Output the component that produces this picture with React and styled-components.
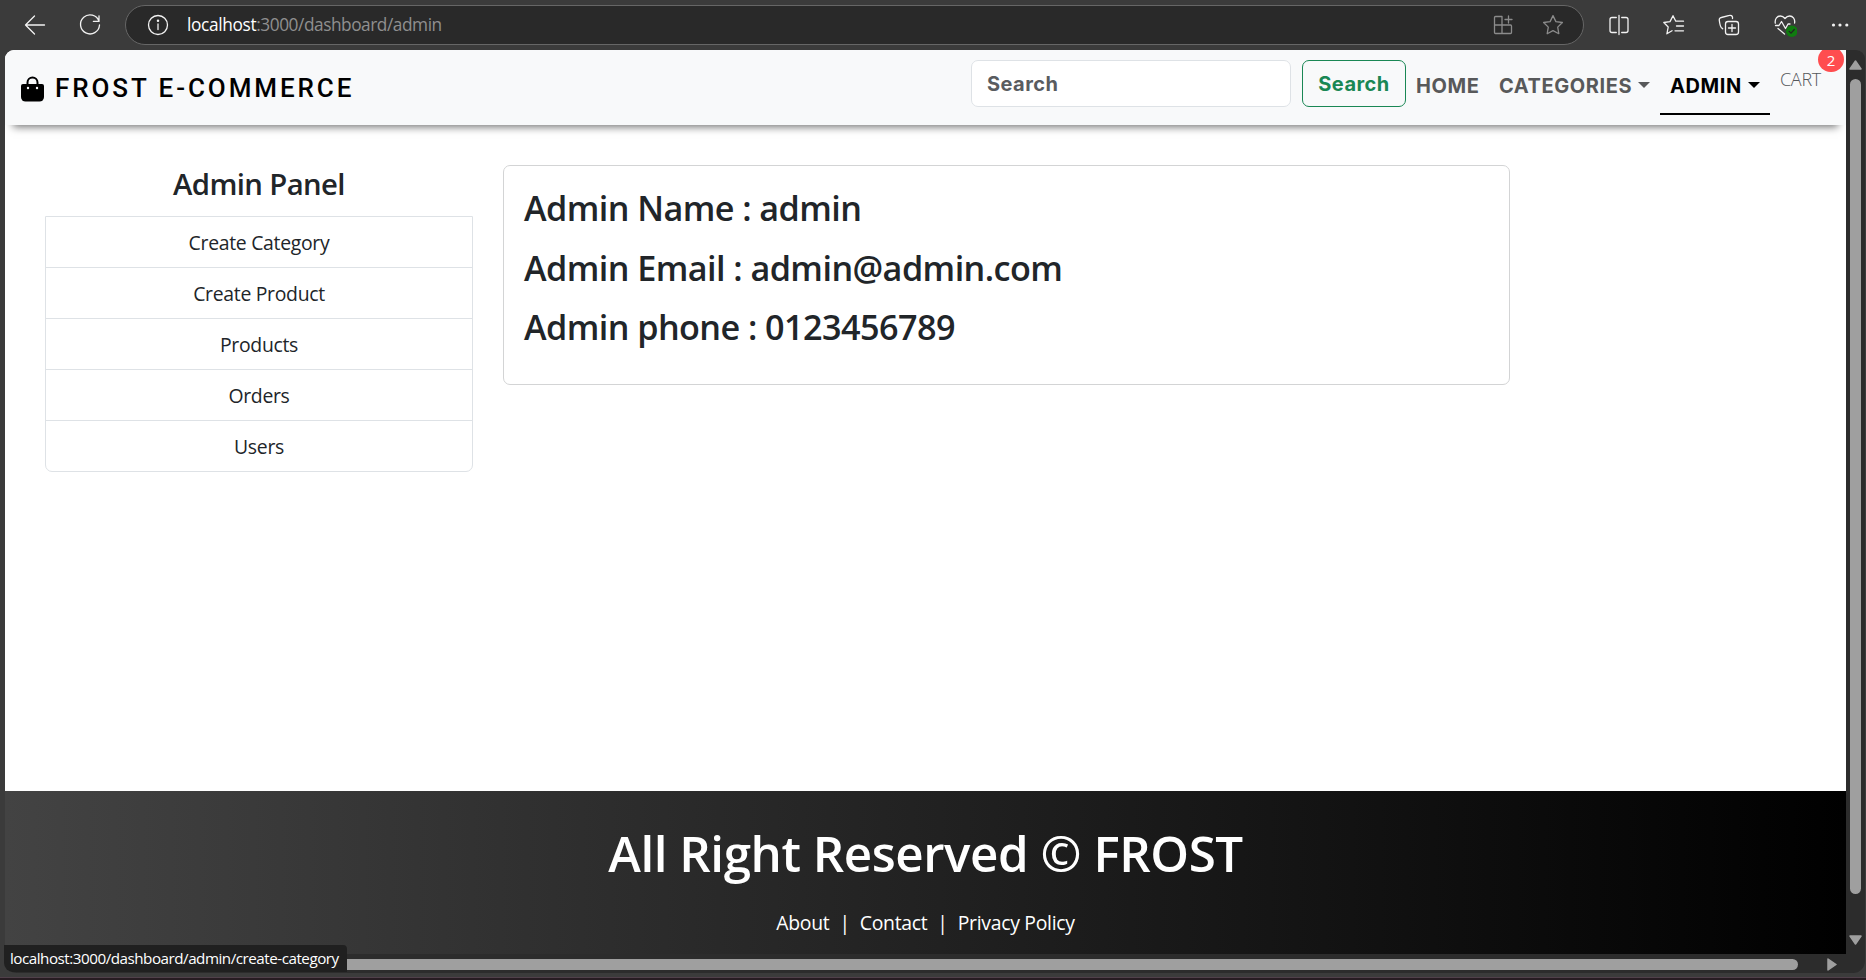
import React from "react";
import styled, { createGlobalStyle, css } from "styled-components";

const GlobalStyle = createGlobalStyle`
  *, *::before, *::after { box-sizing: border-box; }
  body {
    margin: 0;
    overflow: hidden;
    background: #3b3b3b;
    color: #212529;
    font-family: "Open Sans", "Noto Sans", sans-serif;
  }
  a { color: inherit; text-decoration: none; }
  h1, h3, h4, p, ul { margin: 0; padding: 0; }
`;

/* ---------- browser window ---------- */

const Window = styled.div`
  display: flex;
  flex-direction: column;
  width: 1866px;
  height: 980px;
  overflow: hidden;
  background: #3b3b3b;
`;

const BrowserBar = styled.header`
  display: flex;
  align-items: center;
  flex: none;
  height: 50px;
  padding: 0 14px 1px 23px;
  color: #f2f2f2;
`;

const BarActions = styled.div`
  display: flex;
  align-items: center;
  gap: ${(p) => p.$gap}px;
`;

const BarButton = styled.span`
  display: block;
  width: 24px;
  height: 24px;
  color: ${(p) => (p.$muted ? "#8b8b8b" : "inherit")};

  svg {
    display: block;
    width: 24px;
    height: 24px;
    fill: none;
    stroke: currentColor;
    stroke-width: 1.3;
    stroke-linecap: round;
    stroke-linejoin: round;
  }
`;

const AddressBar = styled.div`
  display: flex;
  align-items: center;
  width: 1460px;
  height: 40px;
  margin: 1px 22.5px 0 23px;
  padding: 0 18px 0 19.5px;
  border: 1px solid #666;
  border-radius: 20px;
  background: #292929;
`;

const Url = styled.span`
  flex: 1;
  margin-left: 17.5px;
  color: #8f8f8f;
  font-size: 17.3px;
  letter-spacing: -0.46px;
  line-height: 24px;
  white-space: nowrap;
`;

const Host = styled.span`
  color: #fff;
  letter-spacing: -0.35px;
`;

const Viewport = styled.div`
  display: grid;
  grid-template-columns: 1841px 19px;
  grid-template-rows: 904px 19px;
  flex: none;
  margin-left: 5px;
  width: 1860px;
  overflow: hidden;
  border-radius: 9px 9px 12px 12px;
  background: #2c2c2c;
`;

const Page = styled.div`
  display: flex;
  flex-direction: column;
  overflow: hidden;
  background: #fff;
`;

const VerticalScroll = styled.div`
  display: flex;
  flex-direction: column;
  align-items: center;
  height: 904px;
  padding: 10px 0 9px;
`;

const VerticalThumb = styled.div`
  width: 11px;
  height: 815px;
  margin: 9px 0 41px;
  border-radius: 6px;
  background: #9f9f9f;
`;

const HorizontalScroll = styled.div`
  display: flex;
  align-items: center;
  justify-content: space-between;
  padding: 1px 9px 0 4px;
`;

const HorizontalThumb = styled.div`
  width: 1789px;
  height: 11px;
  border-radius: 6px;
  background: #9f9f9f;
`;

const ScrollArrow = styled.svg`
  display: block;
  flex: none;
  fill: #9f9f9f;
  stroke: #9f9f9f;
  stroke-width: 1.5;
  stroke-linejoin: round;
`;

const DesktopEdge = styled.div`
  height: 3px;
  margin-top: auto;
  border-top: 1px solid #50404a;
  background: #271c22;
`;

const StatusBubble = styled.div`
  position: absolute;
  left: 4px;
  top: 945px;
  width: 343px;
  height: 27px;
  padding-left: 6px;
  border-radius: 0 4px 0 9px;
  background: #202020;
  color: #fff;
  font-size: 15.2px;
  line-height: 27px;
  letter-spacing: -0.48px;
  white-space: nowrap;
`;

/* ---------- store navigation ---------- */

const Navbar = styled.nav`
  display: flex;
  align-items: flex-start;
  flex: none;
  height: 75px;
  background: #f8f9fa;
  box-shadow: 0 10px 8px -8px rgba(0, 0, 0, 0.55);
  font-family: Inter, "Open Sans", sans-serif;
  font-weight: 700;
  font-size: 20px;
`;

const Brand = styled.a`
  display: flex;
  align-items: center;
  gap: 11px;
  height: 75px;
  margin-right: auto;
  padding-left: 16px;
  color: #000;
  font: 500 26px/1 Roboto, sans-serif;
  letter-spacing: 2.92px;
  white-space: nowrap;

  svg {
    width: 23px;
    height: 26px;
    margin-top: 3px;
  }
`;

const SearchForm = styled.form`
  display: flex;
  gap: 11px;
  margin: 0;
  padding-top: 10px;
`;

const field = css`
  height: 47px;
  border-radius: 7px;
  font: inherit;
  letter-spacing: 0.45px;
`;

const SearchInput = styled.input`
  ${field}
  width: 320px;
  padding: 0 15px;
  border: 1px solid #dee2e6;
  background: #fff;
  outline: none;
  &::placeholder { color: #595c5f; opacity: 1; }
`;

const SearchButton = styled.button`
  ${field}
  width: 104px;
  padding: 0;
  border: 1px solid #198754;
  background: transparent;
  color: #198754;
`;

const NavItem = styled.a`
  display: flex;
  align-items: center;
  width: ${(p) => p.$width}px;
  height: 57px;
  margin-top: 8px;
  padding: 0 0 0 10px;
  border-bottom: 2px solid ${(p) => (p.$active ? "#000" : "transparent")};
  color: ${(p) => (p.$active ? "#000" : "#58595a")};
  letter-spacing: 0.58px;
  white-space: nowrap;
`;

const Caret = styled.i`
  margin: 0 0 2px 6px;
  border: 6px solid transparent;
  border-top-color: currentColor;
  border-bottom: 0;
`;

const CartLink = styled.a`
  position: relative;
  width: 76px;
  padding: 17px 0 0 10px;
  color: #55585b;
  font: 300 18px/25px "Open Sans", sans-serif;
  letter-spacing: -0.3px;
`;

const CartBadge = styled.span`
  position: absolute;
  top: -3px;
  left: 48px;
  width: 26px;
  height: 25px;
  border-radius: 13px;
  background: #ff4d4f;
  color: #fff;
  font-weight: 400;
  font-size: 15px;
  line-height: 26px;
  text-align: center;
`;

/* ---------- dashboard ---------- */

const Dashboard = styled.main`
  display: flex;
  align-items: flex-start;
  flex: none;
  gap: 30px;
  height: 666px;
  padding: 40px 0 0 40px;
`;

const Sidebar = styled.aside`
  width: 428px;
  text-align: center;
`;

const SidebarTitle = styled.h4`
  margin-bottom: 12px;
  font-weight: 600;
  font-size: 29.3px;
  line-height: 39px;
  letter-spacing: -0.62px;
`;

const MenuList = styled.div`
  border: 1px solid #dee2e6;
  border-radius: 0 0 7px 7px;
`;

const MenuItem = styled.a`
  display: block;
  height: 51px;
  border-bottom: 1px solid #dee2e6;
  font-size: 19.4px;
  line-height: 52px;
  letter-spacing: -0.3px;
  &:last-child {
    height: 50px;
    border-bottom: 0;
  }
`;

const InfoCard = styled.section`
  display: flex;
  flex-direction: column;
  gap: 9.5px;
  width: 1007px;
  height: 220px;
  padding: 17px 20px;
  border: 1px solid #d3d4d5;
  border-radius: 7px;
`;

const InfoLine = styled.h3`
  font-weight: 600;
  font-size: 34.2px;
  line-height: 50px;
  letter-spacing: -0.57px;
  white-space: nowrap;
`;

const Footer = styled.footer`
  display: flex;
  flex-direction: column;
  align-items: center;
  flex: 1;
  padding-top: 27px;
  background: linear-gradient(to right, #434343 0%, #000 100%);
  color: #fff;
`;

const FooterTitle = styled.h1`
  font-weight: 600;
  font-size: 49.3px;
  line-height: 70px;
  letter-spacing: -0.45px;
`;

const FooterLinks = styled.p`
  display: flex;
  gap: 10px;
  margin-top: 20px;
  font-size: 19.4px;
  line-height: 30px;
  letter-spacing: -0.3px;
`;

const menu = ["Create Category", "Create Product", "Products", "Orders", "Users"];

const admin = [
  ["Admin Name", "admin"],
  ["Admin Email", "admin@admin.com"],
  ["Admin phone", "0123456789"],
];

const STAR = "M12 2.6 L14.9 8.6 L21.4 9.5 L16.7 14.1 L17.8 20.7 L12 17.6 L6.2 20.7 L7.3 14.1 L2.6 9.5 L9.1 8.6 Z";

const BackIcon = () => (
  <svg viewBox="0 0 24 24"><path d="M21.5 12H2.5M11.5 3L2.5 12l9 9" /></svg>
);
const ReloadIcon = () => (
  <svg viewBox="0 0 24 24"><path d="M21 8.3A9.5 9.5 0 1 0 21.5 12M21 2.8v5.6h-5.6" /></svg>
);
const InfoIcon = () => (
  <svg viewBox="0 0 24 24">
    <circle cx="12" cy="12" r="9.5" />
    <path d="M12 11v5.6" />
    <circle cx="12" cy="7.8" r=".6" fill="currentColor" />
  </svg>
);
const AppsIcon = () => (
  <svg viewBox="0 0 24 24">
    <path d="M3.5 4.5a1 1 0 0 1 1-1H11v17H4.500a1 1 0 0 1-1-1zM3.500 12H19.500a1 1 0 0 1 1 1v6.500a1 1 0 0 1-1 1H11M17.500 3v7M14 6.500h7" />
  </svg>
);
const StarIcon = () => (
  <svg viewBox="0 0 24 24"><path d={STAR} /></svg>
);
const SplitIcon = () => (
  <svg viewBox="0 0 24 24">
    <path d="M9.300 4.500H5a2 2 0 0 0-2 2v11a2 2 0 0 0 2 2h4.300M14.700 4.500H19a2 2 0 0 1 2 2v11a2 2 0 0 1-2 2h-4.300M12 2.500v19" />
  </svg>
);
const FavoritesIcon = () => (
  <svg viewBox="0 0 24 24">
    <path d="M10 17.700L4.900 20.800 6.200 14 1.800 9.500 8 8.600 11 2.700 13.800 8.200H21.500M14.500 13H21.500M13 17.800H21.500" />
  </svg>
);
const CollectionsIcon = () => (
  <svg viewBox="0 0 24 24">
    <rect x="8.500" y="8.500" width="13" height="13" rx="2.500" />
    <path d="M15 11.500v7M11.500 15h7M5.700 15.800L4.200 14.400C3 13 2.800 11 2.300 7.300A2.400 2.400 0 0 1 4.300 4.500L12.500 2.400A2.400 2.400 0 0 1 15.500 4.200V5.500" />
  </svg>
);
const HealthIcon = () => (
  <svg viewBox="0 0 24 24">
    <path d="M2.300 10.200C1.500 5.500 4.500 3 7.300 3 9.300 3 10.800 4 12 5.500 13.200 4 14.700 3 16.700 3 19.600 3 22.300 5.600 21.600 10M2.500 12.500H6L8.500 8.500 12.500 15.500 15 11H17M5 15.500L11.500 21" />
    <circle cx="18.800" cy="18.200" r="5.800" fill="#0f7b0f" stroke="none" />
    <path d="M16.200 18.400L18 20.100 21.300 16.500" stroke="#222" />
  </svg>
);
const MoreIcon = () => (
  <svg viewBox="0 0 24 24">
    <g fill="currentColor" stroke="none">
      <circle cx="5.500" cy="12" r="1.600" /><circle cx="12" cy="12" r="1.600" /><circle cx="18.800" cy="12" r="1.600" />
    </g>
  </svg>
);
const BagIcon = () => (
  <svg viewBox="0 0 23 26" fill="none">
    <path d="M6.500 11V6.500a5 5 0 0 1 10 0V11" stroke="#000" strokeWidth="2" />
    <path d="M2 8H21a2 2 0 0 1 2 2v11a4.500 4.500 0 0 1-4.500 4.500h-14A4.500 4.500 0 0 1 0 21V10a2 2 0 0 1 2-2z" fill="#000" />
    <circle cx="7" cy="12" r="1.200" fill="#f8f9fa" />
    <circle cx="16" cy="12" r="1.200" fill="#f8f9fa" />
  </svg>
);

function BrowserToolbar() {
  return (
    <BrowserBar>
      <BarActions $gap={31}>
        <BarButton><BackIcon /></BarButton>
        <BarButton><ReloadIcon /></BarButton>
      </BarActions>
      <AddressBar>
        <BarButton><InfoIcon /></BarButton>
        <Url><Host>localhost</Host>:3000/dashboard/admin</Url>
        <BarActions $gap={26}>
          <BarButton $muted><AppsIcon /></BarButton>
          <BarButton $muted><StarIcon /></BarButton>
        </BarActions>
      </AddressBar>
      <BarActions $gap={31.3}>
        <BarButton><SplitIcon /></BarButton>
        <BarButton><FavoritesIcon /></BarButton>
        <BarButton><CollectionsIcon /></BarButton>
        <BarButton><HealthIcon /></BarButton>
        <BarButton><MoreIcon /></BarButton>
      </BarActions>
    </BrowserBar>
  );
}

function StoreNav() {
  return (
    <Navbar>
      <Brand><BagIcon />FROST E-COMMERCE</Brand>
      <SearchForm>
        <SearchInput placeholder="Search" />
        <SearchButton type="button">Search</SearchButton>
      </SearchForm>
      <NavItem $width={83}>HOME</NavItem>
      <NavItem $width={171}>CATEGORIES<Caret /></NavItem>
      <NavItem $width={110} $active>ADMIN<Caret /></NavItem>
      <CartLink>CART<CartBadge>2</CartBadge></CartLink>
    </Navbar>
  );
}

export default function App() {
  return (
    <Window>
      <GlobalStyle />
      <BrowserToolbar />
      <Viewport>
        <Page>
          <StoreNav />
          <Dashboard>
            <Sidebar>
              <SidebarTitle>Admin Panel</SidebarTitle>
              <MenuList>
                {menu.map((name) => <MenuItem key={name}>{name}</MenuItem>)}
              </MenuList>
            </Sidebar>
            <InfoCard>
              {admin.map(([label, value]) => (
                <InfoLine key={label}>{label} : {value}</InfoLine>
              ))}
            </InfoCard>
          </Dashboard>
          <Footer>
            <FooterTitle>All Right Reserved © FROST</FooterTitle>
            <FooterLinks>
              <a>About</a><span>|</span><a>Contact</a><span>|</span><a>Privacy Policy</a>
            </FooterLinks>
          </Footer>
        </Page>
        <VerticalScroll>
          <ScrollArrow width="13" height="10" viewBox="0 0 13 10"><path d="M6.500 1L12 9H1z" /></ScrollArrow>
          <VerticalThumb />
          <ScrollArrow width="13" height="10" viewBox="0 0 13 10"><path d="M6.500 9L12 1H1z" /></ScrollArrow>
        </VerticalScroll>
        <HorizontalScroll>
          <HorizontalThumb />
          <ScrollArrow width="10" height="13" viewBox="0 0 10 13"><path d="M9 6.500L1 1V12z" /></ScrollArrow>
        </HorizontalScroll>
      </Viewport>
      <DesktopEdge />
      <StatusBubble>localhost:3000/dashboard/admin/create-category</StatusBubble>
    </Window>
  );
}
